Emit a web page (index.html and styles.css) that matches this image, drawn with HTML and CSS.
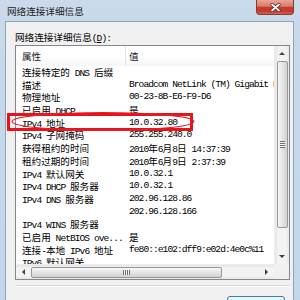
FILE: index.html
```html
<!DOCTYPE html>
<html lang="zh-CN">
<head>
    <meta charset="UTF-8">
    <title>网络连接详细信息</title>
    <link rel="stylesheet" href="styles.css">
</head>
<body>
    <div class="window">
        <div class="titlebar">
            <div class="title">网络连接详细信息</div>
            <div class="close">
                <svg width="11" height="9" viewBox="0 0 11 9">
                    <path d="M2 1.5 L9 7.5 M9 1.5 L2 7.5" stroke="#5b1f18" stroke-width="3.2" stroke-linecap="round"/>
                    <path d="M2 1.5 L9 7.5 M9 1.5 L2 7.5" stroke="#fff" stroke-width="1.8" stroke-linecap="round"/>
                </svg>
            </div>
        </div>

        <div class="dialog">
            <div class="label">网络连接详细信息<span class="en">(<u>D</u>):</span></div>

            <div class="listview">
                <div class="list-body">
                    <div class="header">
                        <div class="h-prop">属性</div>
                        <div class="h-val">值</div>
                    </div>
                    <div class="row"><div class="prop">连接特定的<span class="en"> DNS </span>后缀</div><div class="val"></div></div>
                    <div class="row"><div class="prop">描述</div><div class="val">Broadcom NetLink (TM) Gigabit Ethernet</div></div>
                    <div class="row"><div class="prop">物理地址</div><div class="val">00-23-8B-E6-F9-D6</div></div>
                    <div class="row"><div class="prop">已启用<span class="en"> DHCP</span></div><div class="val"><span class="zh">是</span></div></div>
                    <div class="row"><div class="prop"><span class="en">IPv4 </span>地址</div><div class="val">10.0.32.80</div></div>
                    <div class="row"><div class="prop"><span class="en">IPv4 </span>子网掩码</div><div class="val">255.255.240.0</div></div>
                    <div class="row"><div class="prop">获得租约的时间</div><div class="val">2010<span class="zh">年</span>6<span class="zh">月</span>8<span class="zh">日</span> 14:37:39</div></div>
                    <div class="row"><div class="prop">租约过期的时间</div><div class="val">2010<span class="zh">年</span>6<span class="zh">月</span>9<span class="zh">日</span> 2:37:39</div></div>
                    <div class="row"><div class="prop"><span class="en">IPv4 </span>默认网关</div><div class="val">10.0.32.1</div></div>
                    <div class="row"><div class="prop"><span class="en">IPv4 DHCP </span>服务器</div><div class="val">10.0.32.1</div></div>
                    <div class="row"><div class="prop"><span class="en">IPv4 DNS </span>服务器</div><div class="val">202.96.128.86</div></div>
                    <div class="row"><div class="prop"></div><div class="val">202.96.128.166</div></div>
                    <div class="row"><div class="prop"><span class="en">IPv4 WINS </span>服务器</div><div class="val"></div></div>
                    <div class="row"><div class="prop">已启用<span class="en"> NetBIOS ove...</span></div><div class="val"><span class="zh">是</span></div></div>
                    <div class="row"><div class="prop">连接<span class="en">-</span>本地<span class="en"> IPv6 </span>地址</div><div class="val">fe80::e102:dff9:e02d:4e0c%11</div></div>
                    <div class="row"><div class="prop"><span class="en">IPv6 </span>默认网关</div><div class="val"></div></div>
                </div>

                <div class="vscroll">
                    <div class="sbtn"><span class="arr-up"></span></div>
                    <div class="thumb-v"><span class="grip-v"></span></div>
                    <div class="track"></div>
                    <div class="sbtn"><span class="arr-down"></span></div>
                </div>

                <div class="hscroll">
                    <div class="sbtn-h"><span class="arr-left"></span></div>
                    <div class="thumb-h"><span class="grip-h"></span></div>
                    <div class="track"></div>
                    <div class="sbtn-h"><span class="arr-right"></span></div>
                </div>

                <div class="corner"></div>
            </div>

            <div class="separator"></div>

            <div class="buttons">
                <div class="btn">关闭</div>
            </div>
        </div>

        <!-- red annotation drawn over the IPv4 row -->
        <svg class="mark" width="300" height="300" viewBox="0 0 300 300">
            <rect x="8.5" y="114.5" width="183" height="15" fill="none" stroke="#e8121b" stroke-width="3"/>
            <ellipse cx="103" cy="121.5" rx="91" ry="9" fill="none" stroke="#ea1f26" stroke-width="1.1"/>
        </svg>
    </div>
</body>
</html>
```

FILE: styles.css
```css
/* General Reset */
* {
    margin: 0;
    padding: 0;
    box-sizing: border-box;
}

body {
    width: 300px;
    height: 300px;
    overflow: hidden;
    font-family: "Noto Sans CJK SC", sans-serif;
    font-size: 9.6px;
    color: #000;
}

.window {
    position: relative;
    width: 300px;
    height: 300px;
    background: linear-gradient(to bottom, #cbdaea, #c7d8eb 30%, #c3d6ec);
    display: flex;
    flex-direction: column;
    overflow: hidden;
}

.titlebar {
    height: 21px;
    flex: none;
    display: flex;
    justify-content: space-between;
    padding: 0 6px 0 7px;
}

.title {
    line-height: 23px;
    color: #1b1b1b;
}

.close {
    width: 38px;
    height: 15px;
    border: 1px solid #8b3a30;
    border-top: none;
    border-radius: 0 0 4px 4px;
    background: linear-gradient(to bottom, #e9a597, #d9786a 45%, #c63a2b 52%, #c23b2b 80%, #d2634f);
    display: flex;
    align-items: center;
    justify-content: center;
}

.dialog {
    flex: 1;
    margin: 0 6px 0 5px;
    background: #f0f0f0;
    border: 1px solid #8fa3ba;
    border-bottom: none;
    padding: 9px 3px 0 9px;
    display: flex;
    flex-direction: column;
}

.label {
    height: 13px;
    line-height: 13px;
    margin-bottom: 1px;
    white-space: nowrap;
}

/* half-width latin text, 4.8px per char like the original bitmap font */
.en {
    font-family: "Liberation Mono", monospace;
    font-size: 9.6px;
    letter-spacing: -0.96px;
}

.zh {
    font-family: "Noto Sans CJK SC", sans-serif;
    font-size: 9.6px;
    letter-spacing: 0;
}

.listview {
    height: 235px;
    flex: none;
    border: 1px solid #828790;
    background: #fff;
    display: grid;
    grid-template-columns: 1fr 15px;
    grid-template-rows: 1fr 15px;
}

.list-body {
    overflow: hidden;
    white-space: nowrap;
}

.header {
    display: flex;
    height: 20px;
    line-height: 20px;
    background: linear-gradient(to bottom, #fff, #fff 55%, #f5f6f7);
    color: #222;
}

.h-prop {
    width: 110px;
    flex: none;
    padding-left: 6px;
    border-right: 1px solid #e2e5ea;
}

.h-val {
    padding-left: 3px;
}

.row {
    display: flex;
    height: 12.7px;
    line-height: 12.7px;
}

.prop {
    width: 110px;
    flex: none;
    padding-left: 6px;
    overflow: hidden;
}

.val {
    flex: none;
    padding-left: 3px;
    font-family: "Liberation Mono", monospace;
    font-size: 9.6px;
    letter-spacing: -0.96px;
}

/* scrollbars */
.vscroll {
    display: flex;
    flex-direction: column;
    align-items: center;
    background: linear-gradient(to right, #e6e6e6, #f3f3f3 25%, #f3f3f3 75%, #e6e6e6);
    border-left: 1px solid #ececec;
}

.hscroll {
    display: flex;
    align-items: center;
    background: linear-gradient(to bottom, #e6e6e6, #f3f3f3 25%, #f3f3f3 75%, #e6e6e6);
    border-top: 1px solid #ececec;
}

.corner {
    background: #f0f0f0;
}

.track {
    flex: 1;
}

.sbtn {
    width: 100%;
    height: 15px;
    flex: none;
    display: flex;
    align-items: center;
    justify-content: center;
}

.sbtn-h {
    width: 15px;
    height: 100%;
    flex: none;
    display: flex;
    align-items: center;
    justify-content: center;
}

.thumb-v {
    width: 11px;
    height: 167px;
    flex: none;
    border: 1px solid #979797;
    border-radius: 2px;
    background: linear-gradient(to right, #f7f7f7, #e4e4e4 50%, #d2d2d2);
    display: flex;
    align-items: center;
    justify-content: center;
}

.thumb-h {
    width: 191px;
    height: 11px;
    flex: none;
    border: 1px solid #979797;
    border-radius: 2px;
    background: linear-gradient(to bottom, #f7f7f7, #e4e4e4 50%, #d2d2d2);
    display: flex;
    align-items: center;
    justify-content: center;
}

.grip-v {
    width: 5px;
    height: 7px;
    background: repeating-linear-gradient(to bottom, #6f6f6f 0, #6f6f6f 1px, #f5f5f5 1px, #f5f5f5 2px);
}

.grip-h {
    width: 7px;
    height: 5px;
    background: repeating-linear-gradient(to right, #6f6f6f 0, #6f6f6f 1px, #f5f5f5 1px, #f5f5f5 2px);
}

.arr-up {
    border: 3px solid transparent;
    border-bottom: 3px solid #404040;
    border-top: none;
}

.arr-down {
    border: 3px solid transparent;
    border-top: 3px solid #404040;
    border-bottom: none;
}

.arr-left {
    border: 3px solid transparent;
    border-right: 3px solid #404040;
    border-left: none;
}

.arr-right {
    border: 3px solid transparent;
    border-left: 3px solid #404040;
    border-right: none;
}

.separator {
    margin-top: 5px;
    height: 2px;
    border-top: 1px solid #d5d9de;
    border-bottom: 1px solid #fff;
}

.buttons {
    display: flex;
    justify-content: flex-end;
    padding: 9px 5px 0 0;
}

.btn {
    width: 58px;
    height: 23px;
    border: 1px solid #3c7fb1;
    border-radius: 3px;
    background: linear-gradient(to bottom, #eaf6fd, #d9f0fc 50%, #bee6fd);
    text-align: center;
    line-height: 21px;
}

.mark {
    position: absolute;
    left: 0;
    top: 0;
    pointer-events: none;
}
```
